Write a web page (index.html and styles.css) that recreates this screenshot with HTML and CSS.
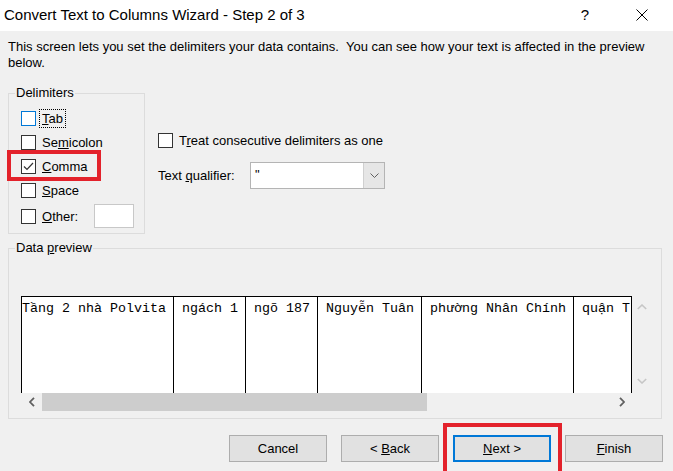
FILE: index.html
```html
<!DOCTYPE html>
<html lang="en">

<head>
    <meta charset="UTF-8">
    <meta name="viewport" content="width=device-width, initial-scale=1.0">
    <title>Convert Text to Columns Wizard - Step 2 of 3</title>
    <link rel="stylesheet" href="styles.css">
</head>

<body>
    <div class="titlebar">
        <span class="title">Convert Text to Columns Wizard - Step 2 of 3</span>
        <span class="help">?</span>
        <span class="close">
            <svg width="12" height="12" viewBox="0 0 12 12">
                <path d="M0.5 0.5 L11.5 11.5 M11.5 0.5 L0.5 11.5" stroke="#000" stroke-width="1" fill="none" />
            </svg>
        </span>
    </div>

    <div class="dialog">
        <p class="intro">This screen lets you set the delimiters your data contains.&nbsp; You can see how your text is affected in the preview below.</p>

        <div class="top-row">
            <div class="group delimiters">
                <span class="group-label">Delimiters</span>
                <label class="check-row">
                    <span class="box focus"></span>
                    <span class="focus-text"><u>T</u>ab</span>
                </label>
                <label class="check-row">
                    <span class="box"></span>
                    <span>Se<u>m</u>icolon</span>
                </label>
                <label class="check-row">
                    <span class="box">
                        <svg width="13" height="13" viewBox="0 0 13 13">
                            <path d="M2 6.5 L5 9.5 L11 3" stroke="#333" stroke-width="1.2" fill="none" />
                        </svg>
                    </span>
                    <span><u>C</u>omma</span>
                </label>
                <label class="check-row">
                    <span class="box"></span>
                    <span><u>S</u>pace</span>
                </label>
                <label class="check-row other">
                    <span class="box"></span>
                    <span class="other-text"><u>O</u>ther:</span>
                    <span class="textbox"></span>
                </label>
            </div>

            <div class="options">
                <label class="check-row treat">
                    <span class="box"></span>
                    <span>T<u>r</u>eat consecutive delimiters as one</span>
                </label>
                <div class="qualifier">
                    <span class="qualifier-text">Text <u>q</u>ualifier:</span>
                    <div class="combo">
                        <span class="combo-value">"</span>
                        <span class="combo-drop">
                            <svg width="9" height="5" viewBox="0 0 9 5">
                                <path d="M0.5 0.5 L4.5 4.5 L8.5 0.5" stroke="#606060" stroke-width="1" fill="none" />
                            </svg>
                        </span>
                    </div>
                </div>
            </div>
        </div>

        <div class="group preview">
            <span class="group-label">Data <u>p</u>review</span>
            <div class="preview-box">
                <div class="preview-main">
                    <div class="sheet">
                        <div class="col" style="width: 152px;"><span>Tầng 2 nhà Polvita</span></div>
                        <div class="col" style="width: 72px;"><span> ngách 1</span></div>
                        <div class="col" style="width: 72px;"><span> ngõ 187</span></div>
                        <div class="col" style="width: 104px;"><span> Nguyễn Tuân</span></div>
                        <div class="col" style="width: 152px;"><span> phường Nhân Chính</span></div>
                        <div class="col last"><span> quận T</span></div>
                    </div>
                    <div class="hscroll">
                        <span class="arrow">
                            <svg width="6" height="10" viewBox="0 0 6 10">
                                <path d="M5 0.8 L1 5 L5 9.2" stroke="#606060" stroke-width="1.8" fill="none" />
                            </svg>
                        </span>
                        <div class="track">
                            <div class="thumb"></div>
                        </div>
                        <span class="arrow">
                            <svg width="6" height="10" viewBox="0 0 6 10">
                                <path d="M1 0.8 L5 5 L1 9.2" stroke="#606060" stroke-width="1.8" fill="none" />
                            </svg>
                        </span>
                    </div>
                </div>
                <div class="vscroll">
                    <svg width="10" height="6" viewBox="0 0 10 6">
                        <path d="M0.8 5 L5 1 L9.2 5" stroke="#c6c6c6" stroke-width="1.6" fill="none" />
                    </svg>
                    <svg width="10" height="6" viewBox="0 0 10 6">
                        <path d="M0.8 1 L5 5 L9.2 1" stroke="#c6c6c6" stroke-width="1.6" fill="none" />
                    </svg>
                </div>
            </div>
        </div>

        <div class="buttons">
            <button class="btn">Cancel</button>
            <button class="btn">&lt; <u>B</u>ack</button>
            <button class="btn default"><u>N</u>ext &gt;</button>
            <button class="btn"><u>F</u>inish</button>
        </div>
    </div>

    <!-- red highlight marks -->
    <div class="mark mark-comma"></div>
    <div class="mark mark-next"></div>
</body>

</html>
```

FILE: styles.css
```css
* {
    margin: 0;
    padding: 0;
    box-sizing: border-box;
}

body {
    width: 673px;
    height: 471px;
    overflow: hidden;
    position: relative;
    background-color: #f0f0f0;
    font-family: "Liberation Sans", Arial, sans-serif;
    font-size: 13px;
    color: #000;
}

u {
    text-decoration: underline;
    text-underline-offset: 1px;
}

/* title bar */
.titlebar {
    height: 31px;
    background-color: #fff;
    display: flex;
    align-items: center;
    padding-left: 4px;
}

.title {
    flex: 1;
    font-size: 15px;
    padding-bottom: 2px;
}

.help {
    width: 20px;
    font-size: 15px;
    margin-right: 41px;
    text-align: center;
    padding-bottom: 2px;
}

.close {
    width: 14px;
    margin-right: 23px;
    display: flex;
    padding-bottom: 2px;
}

/* body of dialog */
.dialog {
    padding: 8px 10px 0 8px;
}

.intro {
    line-height: 16px;
}

.top-row {
    display: flex;
    margin-top: 22px;
}

.group {
    position: relative;
    border: 1px solid #dcdcdc;
}

.group-label {
    position: absolute;
    top: -8px;
    left: 6px;
    padding: 0 1px;
    line-height: 14px;
    background-color: #f0f0f0;
}

.delimiters {
    width: 137px;
    height: 141px;
    padding: 12px 0 0 12px;
}

.check-row {
    display: flex;
    align-items: center;
    height: 24px;
    gap: 6px;
}

.box {
    width: 15px;
    height: 15px;
    flex-shrink: 0;
    border: 1px solid #333;
    background-color: #fff;
    display: flex;
    align-items: center;
    justify-content: center;
}

.box.focus {
    border-color: #0078d7;
}

.focus-text {
    outline: 1px dotted #000;
    outline-offset: 1px;
    padding: 0 1px;
    margin-left: -1px;
}

.other {
    margin-top: 2px;
}

.other-text {
    width: 46px;
}

.textbox {
    width: 40px;
    height: 24px;
    border: 1px solid #c8c8c8;
    background-color: #fff;
}

.options {
    margin-left: 13px;
    padding-top: 35px;
}

.qualifier {
    display: flex;
    align-items: center;
    margin-top: 10px;
}

.qualifier-text {
    width: 92px;
}

.combo {
    width: 135px;
    height: 27px;
    border: 1px solid #b4b4b4;
    background-color: #fff;
    display: flex;
}

.combo-value {
    flex: 1;
    padding: 4px 0 0 4px;
}

.combo-drop {
    width: 21px;
    background-color: #e6e6e6;
    border-left: 1px solid #d0d0d0;
    display: flex;
    align-items: center;
    justify-content: center;
}

/* data preview */
.preview {
    width: 654px;
    height: 171px;
    margin-top: 14px;
    padding: 47px 0 0 12px;
}

.preview-box {
    display: flex;
}

.preview-main {
    width: 611px;
}

.sheet {
    height: 97px;
    display: flex;
    overflow: hidden;
    background-color: #fff;
    border-top: 1px solid #000;
    border-right: 1px solid #000;
}

.col {
    flex-shrink: 0;
    height: 100%;
    border-left: 1px solid #000;
    padding-top: 2px;
    font-family: "Liberation Mono", "Courier New", monospace;
    font-size: 13.33px;
    white-space: pre;
    line-height: 20px;
}

.col.last {
    flex: 1;
    overflow: hidden;
}

.hscroll {
    height: 18px;
    display: flex;
    align-items: center;
}

.hscroll .arrow {
    width: 21px;
    display: flex;
    justify-content: center;
}

.track {
    flex: 1;
    height: 18px;
}

.thumb {
    width: 385px;
    height: 18px;
    background-color: #cdcdcd;
}

.vscroll {
    width: 19px;
    height: 97px;
    display: flex;
    flex-direction: column;
    align-items: center;
    justify-content: space-between;
    padding: 8px 0 9px;
}

/* buttons */
.buttons {
    display: flex;
    justify-content: flex-end;
    gap: 14px;
    margin-top: 16px;
}

.btn {
    width: 98px;
    height: 27px;
    border: 1px solid #adadad;
    background-color: #e1e1e1;
    font-family: "Liberation Sans", Arial, sans-serif;
    font-size: 13px;
    color: #000;
}

.btn.default {
    border: 2px solid #0078d7;
}

/* red highlights */
.mark {
    position: absolute;
    border: 4px solid #e3222b;
}

.mark-comma {
    left: 7px;
    top: 150px;
    width: 94px;
    height: 31px;
}

.mark-next {
    left: 443px;
    top: 423px;
    width: 119px;
    height: 60px;
}
```
